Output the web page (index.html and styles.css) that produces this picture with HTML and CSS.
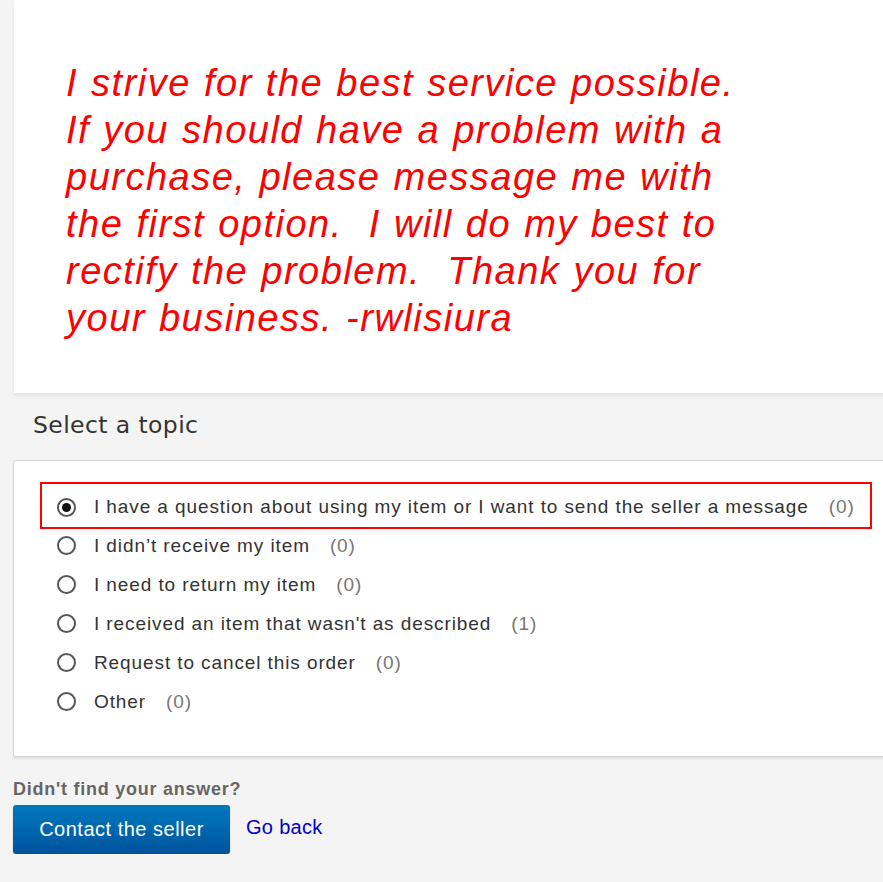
FILE: index.html
```html
<!DOCTYPE html>
<html lang="en">
<head>
    <meta charset="UTF-8">
    <meta name="viewport" content="width=device-width, initial-scale=1.0">
    <title>Select a topic</title>
    <link rel="stylesheet" href="styles.css">
</head>
<body>
    <div class="page">
        <div class="notice">
            <p class="notice-text">I strive for the best service possible.<br>
            If you should have a problem with a<br>
            purchase, please message me with<br>
            the first option.&nbsp; I will do my best to<br>
            rectify the problem.&nbsp; Thank you for<br>
            your business. -rwlisiura</p>
        </div>

        <h2 class="topic-title">Select a topic</h2>

        <div class="topic-card">
            <div class="highlight">
                <label class="option"><span class="radio checked"></span>I have a question about using my item or I want to send the seller a message<span class="count">(0)</span></label>
            </div>
            <label class="option"><span class="radio"></span>I didn’t receive my item<span class="count">(0)</span></label>
            <label class="option"><span class="radio"></span>I need to return my item<span class="count">(0)</span></label>
            <label class="option"><span class="radio"></span>I received an item that wasn't as described<span class="count">(1)</span></label>
            <label class="option"><span class="radio"></span>Request to cancel this order<span class="count">(0)</span></label>
            <label class="option"><span class="radio"></span>Other<span class="count">(0)</span></label>
        </div>

        <p class="help">Didn't find your answer?</p>
        <div class="actions">
            <button type="button" class="btn-contact">Contact the seller</button>
            <a href="#" class="go-back">Go back</a>
        </div>
    </div>
</body>
</html>
```

FILE: styles.css
```css
html, body { margin: 0; padding: 0; }
body { font-family: Arial, "Liberation Sans", sans-serif; background-color: #f4f4f4; overflow: hidden; }
.page { padding-left: 13px; width: 890px; }
.notice { background: #fff; margin-left: 1px; height: 393px; box-shadow: 0 3px 3px rgba(0, 0, 0, 0.06); padding: 60px 0 0 52px; box-sizing: border-box; }
.notice-text { margin: 0; color: #ff0000; font-style: italic; font-size: 38px; line-height: 47px; letter-spacing: 1.5px; word-spacing: 1px; }
.topic-title { margin: 15px 0 0 20px; height: 52px; font-family: "DejaVu Sans", sans-serif; font-weight: normal; font-size: 23.5px; color: #333; line-height: 34px; letter-spacing: 0.4px; }
.topic-card { background: #fff; border: 1px solid #d4d4d4; border-radius: 3px; box-shadow: 0 2px 2px rgba(0, 0, 0, 0.08); height: 297px; box-sizing: border-box; padding: 21px 0 0 26px; }
.highlight { border: 2px solid #ff0000; width: 832px; height: 47px; box-sizing: border-box; padding-top: 4px; margin-bottom: -3px; }
.option { display: flex; align-items: center; height: 39px; font-size: 19px; color: #333; padding-left: 17px; letter-spacing: 0.9px; }
.highlight .option { padding-left: 15px; height: 38px; }
.radio { width: 15px; height: 15px; border: 2px solid #555; border-radius: 50%; margin-right: 18px; box-sizing: content-box; display: flex; align-items: center; justify-content: center; flex-shrink: 0; }
.radio.checked::after { content: ""; width: 9px; height: 9px; border-radius: 50%; background: #111; }
.count { color: #777; margin-left: 20px; }
.help { margin: 21px 0 0 0; font-size: 18px; font-weight: bold; color: #666; line-height: 22px; letter-spacing: 0.75px; }
.actions { display: flex; align-items: center; margin-top: 5px; }
.btn-contact { width: 217px; height: 49px; border: none; border-radius: 3px; background: linear-gradient(#0079bd, #00539c); color: #fff; font-family: Arial, "Liberation Sans", sans-serif; font-size: 20px; letter-spacing: 0.5px; box-shadow: 0 2px 2px rgba(0, 0, 0, 0.15); cursor: pointer; }
.go-back { margin-left: 16px; color: #0000cc; font-size: 20px; text-decoration: none; margin-top: -4px; letter-spacing: 0.3px; }
```
